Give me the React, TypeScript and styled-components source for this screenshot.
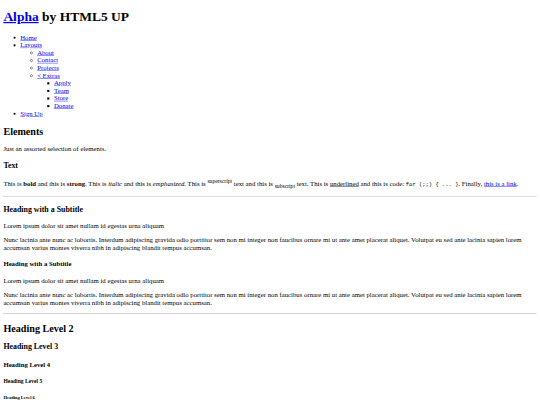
import React from 'react';
import styled, { createGlobalStyle } from 'styled-components';

// The reference is an unstyled page laid out at 1280px wide and shrunk to 540px
const SCALE = 540 / 1280;

const GlobalStyle = createGlobalStyle`
  html, body {
    margin: 0;
    overflow: hidden;
    background: #fff;
  }
`;

const Page = styled.div`
  display: flow-root;
  width: 1280px;
  transform: scale(${SCALE});
  transform-origin: 0 0;
`;

const Body = styled.div`
  margin: 8px;
  font-family: "Liberation Serif", "Times New Roman", serif;
  font-size: 16px;
  color: #000;
`;

const PageHeader = styled.header`
  display: block;
`;

const Title = styled.h1`
  font-size: 2em;
  font-weight: bold;
  margin: 0.67em 0;
`;

const Link = styled.a`
  color: #0000ee;
  text-decoration: underline;
`;

const NavList = styled.ul<{ $marker: string; $nested?: boolean }>`
  list-style-type: ${props => props.$marker};
  margin: ${props => (props.$nested ? '0' : '1em 0')};
  padding-left: 40px;
`;

const NavItem = styled.li`
  display: list-item;
`;

const Main = styled.section`
  display: block;
`;

const H2 = styled.h2`
  font-size: 1.5em;
  font-weight: bold;
  margin: 0.83em 0;
`;

const H3 = styled.h3`
  font-size: 1.17em;
  font-weight: bold;
  margin: 1em 0;
`;

const H4 = styled.h4`
  font-size: 1em;
  font-weight: bold;
  margin: 1.33em 0;
`;

const H5 = styled.h5`
  font-size: 0.83em;
  font-weight: bold;
  margin: 1.67em 0;
`;

const H6 = styled.h6`
  font-size: 0.67em;
  font-weight: bold;
  margin: 2.33em 0;
`;

const Paragraph = styled.p`
  margin: 1em 0;
`;

const Rule = styled.hr`
  color: gray;
  margin: 0.5em auto;
  border-style: inset;
  border-width: 1px;
  overflow: hidden;
`;

const Code = styled.code`
  font-family: "Liberation Mono", "Courier New", monospace;
  font-size: 13px;
`;

const Sup = styled.sup`
  font-size: smaller;
  vertical-align: super;
`;

const Sub = styled.sub`
  font-size: smaller;
  vertical-align: sub;
`;

const lorem =
  'Nunc lacinia ante nunc ac lobortis. Interdum adipiscing gravida odio porttitor sem non mi integer non faucibus ornare mi ut ante amet placerat aliquet. Volutpat eu sed ante lacinia sapien lorem accumsan varius montes viverra nibh in adipiscing blandit tempus accumsan.';

const subtitle = 'Lorem ipsum dolor sit amet nullam id egestas urna aliquam';

export default function App() {
  return (
    <>
      <GlobalStyle />
      <Page>
        <Body>
          <PageHeader>
            <Title>
              <Link href="#">Alpha</Link> by HTML5 UP
            </Title>
            <nav>
              <NavList $marker="disc">
                <NavItem><Link href="#">Home</Link></NavItem>
                <NavItem>
                  <Link href="#">Layouts</Link>
                  <NavList $marker="circle" $nested>
                    <NavItem><Link href="#">About</Link></NavItem>
                    <NavItem><Link href="#">Contact</Link></NavItem>
                    <NavItem><Link href="#">Projects</Link></NavItem>
                    <NavItem>
                      <Link href="#">&lt; Extras</Link>
                      <NavList $marker="square" $nested>
                        <NavItem><Link href="#">Apply</Link></NavItem>
                        <NavItem><Link href="#">Team</Link></NavItem>
                        <NavItem><Link href="#">Store</Link></NavItem>
                        <NavItem><Link href="#">Donate</Link></NavItem>
                      </NavList>
                    </NavItem>
                  </NavList>
                </NavItem>
                <NavItem><Link href="#">Sign Up</Link></NavItem>
              </NavList>
            </nav>
          </PageHeader>

          <Main>
            <header>
              <H2>Elements</H2>
              <Paragraph>Just an assorted selection of elements.</Paragraph>
            </header>
            <section>
              <H3>Text</H3>
              <Paragraph>
                This is <b>bold</b> and this is <strong>strong</strong>. This is <i>italic</i> and
                this is <em>emphasized</em>. This is <Sup>superscript</Sup> text and this is{' '}
                <Sub>subscript</Sub> text. This is <u>underlined</u> and this is code:{' '}
                <Code>for (;;) {'{'} ... {'}'}</Code>. Finally, <Link href="#">this is a link</Link>.
              </Paragraph>
              <Rule />
              <header>
                <H3>Heading with a Subtitle</H3>
                <Paragraph>{subtitle}</Paragraph>
              </header>
              <Paragraph>{lorem}</Paragraph>
              <header>
                <H4>Heading with a Subtitle</H4>
                <Paragraph>{subtitle}</Paragraph>
              </header>
              <Paragraph>{lorem}</Paragraph>
              <Rule />
              <H2>Heading Level 2</H2>
              <H3>Heading Level 3</H3>
              <H4>Heading Level 4</H4>
              <H5>Heading Level 5</H5>
              <H6>Heading Level 6</H6>
            </section>
          </Main>
        </Body>
      </Page>
    </>
  );
}
